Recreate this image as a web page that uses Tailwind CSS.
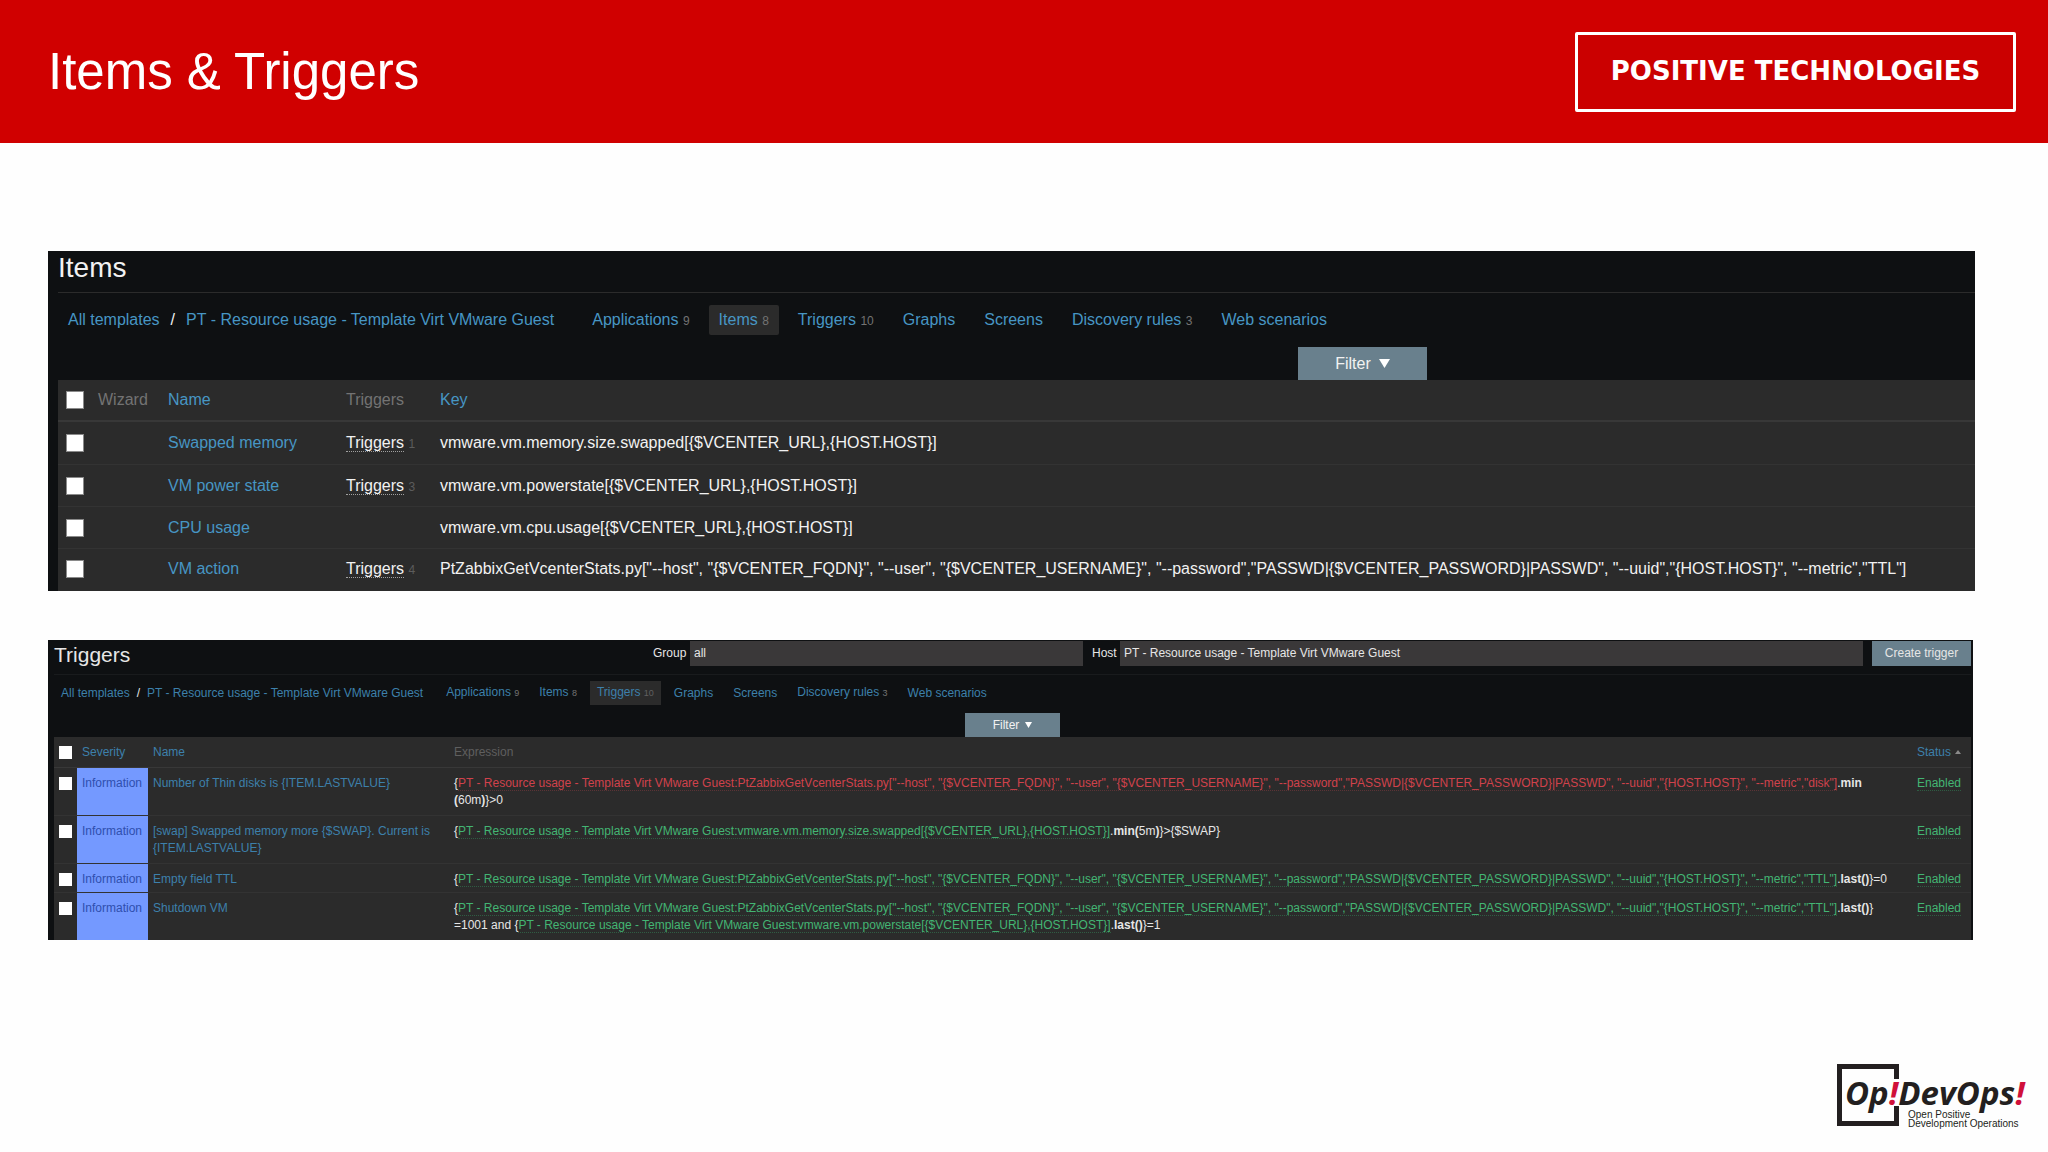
<!DOCTYPE html>
<html lang="en">
  <head>
    <meta charset="UTF-8" />
    <meta name="viewport" content="width=device-width, initial-scale=1.0" />
    <title>Items &amp; Triggers</title>
    <script src="https://cdn.jsdelivr.net/npm/@tailwindcss/browser@4"></script>
  </head>
  <body class="min-h-screen flex flex-col bg-[#fefefe] font-['Liberation_Sans',Arial,sans-serif]">
    <header class="h-[143px] bg-[#d00000] pl-12 pr-8 flex items-center justify-between">
      <h1 class="text-[51px] leading-none text-white">Items &amp; Triggers</h1>
      <div class="w-[441px] h-20 border-3 border-white rounded-xs bg-[#cb0000] flex items-center justify-center text-[26px] font-bold text-white whitespace-nowrap font-['DejaVu_Sans',sans-serif]">POSITIVE TECHNOLOGIES</div>
    </header>

    <main class="flex-1 pl-12 pr-[73px] pt-[108px]">
      <!-- Items -->
      <section class="bg-[#0e1012] pl-[10px] text-base leading-5 whitespace-nowrap overflow-hidden">
        <h2 class="h-[42px] border-b border-[#2b2b2b] text-[28px] leading-[34px] text-[#f2f2f2]">Items</h2>
        <nav class="mt-3 h-[30px] pl-[10px] flex items-center text-[#4796c4]">
          <a href="#">All templates</a>
          <span class="px-[11px] text-[#f2f2f2]">/</span>
          <a href="#">PT - Resource usage - Template Virt VMware Guest</a>
          <ul class="ml-7 flex items-center gap-[9px]">
            <li class="px-[10px]"><a href="#">Applications <span class="text-xs text-[#737373]">9</span></a></li>
            <li class="px-[10px] py-[5px] bg-[#2b2b2b] rounded-xs"><a href="#">Items <span class="text-xs text-[#737373]">8</span></a></li>
            <li class="px-[10px]"><a href="#">Triggers <span class="text-xs text-[#737373]">10</span></a></li>
            <li class="px-[10px]"><a href="#">Graphs</a></li>
            <li class="px-[10px]"><a href="#">Screens</a></li>
            <li class="px-[10px]"><a href="#">Discovery rules <span class="text-xs text-[#737373]">3</span></a></li>
            <li class="px-[10px]"><a href="#">Web scenarios</a></li>
          </ul>
        </nav>
        <div class="mt-3 flex justify-end pr-[548px]">
          <button class="w-[129px] h-[33px] bg-[#69808d] text-[#f2f2f2] flex items-center justify-center gap-2">
            Filter
            <svg class="w-[11px] h-[9px]" viewBox="0 0 11 9"><path d="M0 0h11L5.500 9z" fill="#fff" /></svg>
          </button>
        </div>
        <table class="w-full table-fixed border-separate border-spacing-0 bg-[#2b2b2b] text-left">
          <thead>
            <tr class="h-[42px] *:border-b-2 *:border-[#383838] *:font-normal *:align-middle">
              <th class="w-10 pl-2"><input type="checkbox" aria-label="Select all items" class="block appearance-none w-[18px] h-[18px] bg-white border border-[#8a8a8a]" /></th>
              <th class="w-[70px] text-[#737373]">Wizard</th>
              <th class="w-[178px] text-[#4796c4]"><a href="#">Name</a></th>
              <th class="w-[94px] text-[#737373]">Triggers</th>
              <th class="text-[#4796c4]"><a href="#">Key</a></th>
            </tr>
          </thead>
          <tbody class="text-[#f2f2f2]">
            <tr class="h-[43px] *:border-b *:border-[#333333]">
              <td class="pl-2"><input type="checkbox" aria-label="Swapped memory" class="block appearance-none w-[18px] h-[18px] bg-white border border-[#8a8a8a]" /></td>
              <td></td>
              <td><a href="#" class="text-[#4796c4]">Swapped memory</a></td>
              <td><a href="#" class="border-b border-dotted border-[#a0a0a0]">Triggers</a> <span class="text-xs text-[#5c5c5c]">1</span></td>
              <td>vmware.vm.memory.size.swapped[{$VCENTER_URL},{HOST.HOST}]</td>
            </tr>
            <tr class="h-[42px] *:border-b *:border-[#333333]">
              <td class="pl-2"><input type="checkbox" aria-label="VM power state" class="block appearance-none w-[18px] h-[18px] bg-white border border-[#8a8a8a]" /></td>
              <td></td>
              <td><a href="#" class="text-[#4796c4]">VM power state</a></td>
              <td><a href="#" class="border-b border-dotted border-[#a0a0a0]">Triggers</a> <span class="text-xs text-[#5c5c5c]">3</span></td>
              <td>vmware.vm.powerstate[{$VCENTER_URL},{HOST.HOST}]</td>
            </tr>
            <tr class="h-[42px] *:border-b *:border-[#333333]">
              <td class="pl-2"><input type="checkbox" aria-label="CPU usage" class="block appearance-none w-[18px] h-[18px] bg-white border border-[#8a8a8a]" /></td>
              <td></td>
              <td><a href="#" class="text-[#4796c4]">CPU usage</a></td>
              <td></td>
              <td>vmware.vm.cpu.usage[{$VCENTER_URL},{HOST.HOST}]</td>
            </tr>
            <tr class="h-[42px] *:pb-0.5">
              <td class="pl-2"><input type="checkbox" aria-label="VM action" class="block appearance-none w-[18px] h-[18px] bg-white border border-[#8a8a8a]" /></td>
              <td></td>
              <td><a href="#" class="text-[#4796c4]">VM action</a></td>
              <td><a href="#" class="border-b border-dotted border-[#a0a0a0]">Triggers</a> <span class="text-xs text-[#5c5c5c]">4</span></td>
              <td>PtZabbixGetVcenterStats.py["--host", "{$VCENTER_FQDN}", "--user", "{$VCENTER_USERNAME}", "--password","PASSWD|{$VCENTER_PASSWORD}|PASSWD", "--uuid","{HOST.HOST}", "--metric","TTL"]</td>
            </tr>
          </tbody>
        </table>
      </section>

      <!-- Triggers -->
      <section class="mt-[49px] mr-0.5 bg-[#0e1012] pl-1.5 pr-0.5 text-xs leading-[17px] whitespace-nowrap overflow-hidden">
        <div class="h-[35px] pt-px border-b border-[#191b1d] flex items-start text-[#e6e6e6]">
          <h2 class="w-[599px] text-[21px] leading-7">Triggers</h2>
          <label for="group" class="w-[37px] leading-[25px]">Group</label>
          <select id="group" class="w-[393px] h-[25px] pl-1 appearance-none bg-[#3a3839]">
            <option>all</option>
          </select>
          <label for="host" class="w-[37px] pl-[9px] leading-[25px]">Host</label>
          <select id="host" class="flex-1 h-[25px] pl-1 appearance-none bg-[#3a3839]">
            <option>PT - Resource usage - Template Virt VMware Guest</option>
          </select>
          <button class="ml-[9px] w-[99px] h-[25px] bg-[#69808d]">Create trigger</button>
        </div>
        <nav class="mt-[7px] h-[22px] pl-[7px] flex items-center text-[#3d80ab]">
          <a href="#">All templates</a>
          <span class="px-[7px] text-[#e6e6e6]">/</span>
          <a href="#">PT - Resource usage - Template Virt VMware Guest</a>
          <ul class="ml-4 flex items-center gap-1.5">
            <li class="px-[7px]"><a href="#">Applications <span class="text-[9px] text-[#737373]">9</span></a></li>
            <li class="px-[7px]"><a href="#">Items <span class="text-[9px] text-[#737373]">8</span></a></li>
            <li class="px-[7px] py-[3px] bg-[#2b2b2b]"><a href="#">Triggers <span class="text-[9px] text-[#606060]">10</span></a></li>
            <li class="px-[7px]"><a href="#">Graphs</a></li>
            <li class="px-[7px]"><a href="#">Screens</a></li>
            <li class="px-[7px]"><a href="#">Discovery rules <span class="text-[9px] text-[#737373]">3</span></a></li>
            <li class="px-[7px]"><a href="#">Web scenarios</a></li>
          </ul>
        </nav>
        <div class="mt-[9px] flex justify-center">
          <button class="w-[95px] h-6 bg-[#69808d] text-[#f2f2f2] flex items-center justify-center gap-1.5">
            Filter
            <svg class="w-[7px] h-[6px]" viewBox="0 0 7 6"><path d="M0 0h7L3.500 6z" fill="#fff" /></svg>
          </button>
        </div>
        <table class="w-full table-fixed border-separate border-spacing-0 bg-[#2b2b2b] text-left">
          <thead>
            <tr class="h-[31px] *:border-b *:border-[#383838] *:font-normal *:align-middle text-[#3d80ab]">
              <th class="w-[23px] pl-[5px]"><input type="checkbox" aria-label="Select all triggers" class="block appearance-none w-[13px] h-[13px] bg-white" /></th>
              <th class="w-[71px] pl-[5px]"><a href="#">Severity</a></th>
              <th class="w-[306px] pl-[5px]"><a href="#">Name</a></th>
              <th class="text-[#5f5f5f]">Expression</th>
              <th class="w-[59px] pl-[5px]">
                <a href="#" class="flex items-center gap-1">Status <svg class="w-[6px] h-[4px]" viewBox="0 0 6 4"><path d="M0 4h6L3 0z" fill="#8a8a8a" /></svg></a>
              </th>
            </tr>
          </thead>
          <tbody class="text-[#e6e6e6] *:*:align-top *:*:pt-[7px]">
            <tr class="h-12 *:border-b *:border-[#333333]">
              <td class="pl-[5px]"><input type="checkbox" aria-label="Number of Thin disks" class="block mt-0.5 appearance-none w-[13px] h-[13px] bg-white" /></td>
              <td class="pl-[5px] bg-[#7499ff] text-[#2f4fae]">Information</td>
              <td class="pl-[5px]"><a href="#" class="text-[#3d80ab]">Number of Thin disks is {ITEM.LASTVALUE}</a></td>
              <td>{<a href="#" class="text-[#d0424b] border-b border-dotted border-[#5c3336]">PT - Resource usage - Template Virt VMware Guest:PtZabbixGetVcenterStats.py["--host", "{$VCENTER_FQDN}", "--user", "{$VCENTER_USERNAME}", "--password","PASSWD|{$VCENTER_PASSWORD}|PASSWD", "--uuid","{HOST.HOST}", "--metric","disk"]</a>.<b>min</b><br /><b>(</b>60m<b>)</b>}&gt;0</td>
              <td class="pl-[5px]"><a href="#" class="text-[#43b573] border-b border-dotted border-[#2f5c43]">Enabled</a></td>
            </tr>
            <tr class="h-12 *:border-b *:border-[#333333]">
              <td class="pl-[5px]"><input type="checkbox" aria-label="Swapped memory more" class="block mt-0.5 appearance-none w-[13px] h-[13px] bg-white" /></td>
              <td class="pl-[5px] bg-[#7499ff] text-[#2f4fae]">Information</td>
              <td class="pl-[5px]"><a href="#" class="text-[#3d80ab]">[swap] Swapped memory more {$SWAP}. Current is<br />{ITEM.LASTVALUE}</a></td>
              <td>{<a href="#" class="text-[#43b573] border-b border-dotted border-[#2f5c43]">PT - Resource usage - Template Virt VMware Guest:vmware.vm.memory.size.swapped[{$VCENTER_URL},{HOST.HOST}]</a>.<b>min(</b>5m<b>)</b>}&gt;{$SWAP}</td>
              <td class="pl-[5px]"><a href="#" class="text-[#43b573] border-b border-dotted border-[#2f5c43]">Enabled</a></td>
            </tr>
            <tr class="h-[29px] *:border-b *:border-[#333333]">
              <td class="pl-[5px]"><input type="checkbox" aria-label="Empty field TTL" class="block mt-0.5 appearance-none w-[13px] h-[13px] bg-white" /></td>
              <td class="pl-[5px] bg-[#7499ff] text-[#2f4fae]">Information</td>
              <td class="pl-[5px]"><a href="#" class="text-[#3d80ab]">Empty field TTL</a></td>
              <td>{<a href="#" class="text-[#43b573] border-b border-dotted border-[#2f5c43]">PT - Resource usage - Template Virt VMware Guest:PtZabbixGetVcenterStats.py["--host", "{$VCENTER_FQDN}", "--user", "{$VCENTER_USERNAME}", "--password","PASSWD|{$VCENTER_PASSWORD}|PASSWD", "--uuid","{HOST.HOST}", "--metric","TTL"]</a>.<b>last()</b>}=0</td>
              <td class="pl-[5px]"><a href="#" class="text-[#43b573] border-b border-dotted border-[#2f5c43]">Enabled</a></td>
            </tr>
            <tr class="h-[47px]">
              <td class="pl-[5px]"><input type="checkbox" aria-label="Shutdown VM" class="block mt-0.5 appearance-none w-[13px] h-[13px] bg-white" /></td>
              <td class="pl-[5px] bg-[#7499ff] text-[#2f4fae]">Information</td>
              <td class="pl-[5px]"><a href="#" class="text-[#3d80ab]">Shutdown VM</a></td>
              <td>{<a href="#" class="text-[#43b573] border-b border-dotted border-[#2f5c43]">PT - Resource usage - Template Virt VMware Guest:PtZabbixGetVcenterStats.py["--host", "{$VCENTER_FQDN}", "--user", "{$VCENTER_USERNAME}", "--password","PASSWD|{$VCENTER_PASSWORD}|PASSWD", "--uuid","{HOST.HOST}", "--metric","TTL"]</a>.<b>last()</b>}<br />=1001 and {<a href="#" class="text-[#43b573] border-b border-dotted border-[#2f5c43]">PT - Resource usage - Template Virt VMware Guest:vmware.vm.powerstate[{$VCENTER_URL},{HOST.HOST}]</a>.<b>last()</b>}=1</td>
              <td class="pl-[5px]"><a href="#" class="text-[#43b573] border-b border-dotted border-[#2f5c43]">Enabled</a></td>
            </tr>
          </tbody>
        </table>
      </section>
    </main>

    <footer class="flex justify-end pr-5 pb-6">
      <div class="relative w-[191px] h-16 pl-2 pt-[14px] text-[#231f20] whitespace-nowrap">
        <svg class="absolute left-0 top-0 w-[62px] h-[62px]" viewBox="0 0 62 62" fill="none" stroke="#231f20" stroke-width="5">
          <path d="M59.500 15V2.500H2.500V59.500H59.500V42" />
        </svg>
        <p class="relative text-[33px] leading-[30px] font-bold italic font-['Open_Sans',sans-serif]">Op<span class="text-[#d0103a]">!</span>DevOps<span class="text-[#d0103a]">!</span></p>
        <p class="pl-[63px] pt-0.5 text-[10px] leading-[9px]">Open Positive<br />Development Operations</p>
      </div>
    </footer>
  </body>
</html>
